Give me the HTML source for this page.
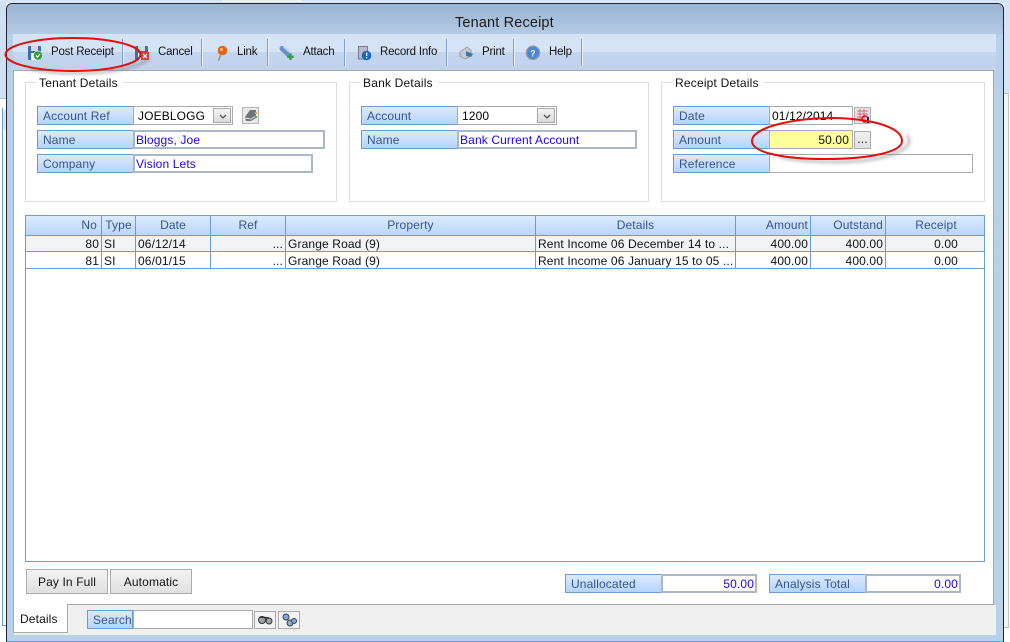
<!DOCTYPE html>
<html><head><meta charset="utf-8"><title>Tenant Receipt</title>
<style>
html,body{margin:0;padding:0;background:#fff}
body{width:1010px;height:642px;overflow:hidden;position:relative;font:12px "Liberation Sans",sans-serif;letter-spacing:.13px;color:#000}
div,span{position:absolute;box-sizing:border-box;white-space:nowrap}
.lb{height:19px;width:97px;border:1px solid #6b9bd2;background:linear-gradient(#dcebfd,#b5d3fb);color:#35558f;line-height:17px;padding:1px 0 0 5px}
.in{height:19px;background:#fff;border:2px solid #a9b7c7;color:#2200ee;line-height:15px;padding:1px 0 0 1px}
.cb{height:19px;background:#fff;border:1px solid #ababab;line-height:17px;padding:1px 0 0 4px}
.dd{width:18px;height:15px;top:1px;right:1px;background:linear-gradient(#f2f2f2,#dcdcdc);border:1px solid #a8a8a8}
.gb{border:1px solid #dcdcdc;top:82px;height:120px}
.gt{top:76px;background:#fff;padding:0 5px 0 3px;line-height:14px;color:#111;letter-spacing:.2px}
.sep{width:1px;top:39px;height:27px;background:#7f9fc8;box-shadow:1px 0 0 #e6eefa}
.tb{top:39px;line-height:27px;color:#111;font-size:11.5px;letter-spacing:-.2px}
.h{top:216px;height:19px;border-right:1px solid #6b9bd2;background:linear-gradient(#dcebfd,#bad6fb);color:#35558f;line-height:19px;text-align:center}
.c{height:17px;line-height:16px;padding:1px 2px 0;border-right:1px solid #6b9bd2;border-bottom:1px solid #6b9bd2;overflow:hidden;color:#111}
.r{text-align:right}
.btn{top:569px;height:25px;width:82px;background:linear-gradient(#f3f3f3,#e0e0e0);border:1px solid #ababab;text-align:center;line-height:23px;padding-top:1px;color:#111}
.ic{top:611px;height:18px;width:22px;background:#f2f2f2;border:1px solid #ababab}
svg{position:absolute;overflow:visible}
</style></head><body>
<!-- background behind window -->
<div style="left:0;top:0;width:1010px;height:3px;background:#d6e4f5"></div>
<div style="left:222px;top:0;width:80px;height:2px;background:#eef0f2"></div>
<div style="left:0;top:3px;width:6px;height:95px;background:#cfe0f2"></div>
<div style="left:2px;top:110px;width:4px;height:20px;background:#dbe8f7"></div>
<div style="left:2px;top:108px;width:1px;height:517px;background:#6b9bd2"></div>
<div style="left:2px;top:625px;width:4px;height:1px;background:#6b9bd2"></div>
<div style="left:0;top:98px;width:6px;height:1px;background:#bbb"></div>
<div style="left:1004px;top:3px;width:6px;height:90px;background:#d6e4f5"></div>
<div style="left:1004px;top:93px;width:5px;height:535px;background:#f4f4f4;border-bottom:1px solid #bbb;border-right:1px solid #c0c0c0;border-top:1px solid #c0c0c0"></div>
<!-- window -->
<div style="left:6px;top:3px;width:998px;height:639px;border:1px solid #1d2433;border-bottom:0;border-radius:6px 6px 0 0;background:#b9d0e9;overflow:hidden">
 <div style="left:0;top:0;width:996px;height:31px;background:linear-gradient(#99b4d1,#b5cbe4)"></div>
 <div style="left:0;bottom:0;width:996px;height:1px;background:#3bb8d8"></div>
</div>
<div style="left:455px;top:14px;font-size:14.5px;line-height:18px;letter-spacing:.15px;color:#1a1a1a">Tenant Receipt</div>
<!-- toolbar -->
<div style="left:13px;top:34px;width:983px;height:36px;background:linear-gradient(#d5e3f6 0,#d5e3f6 50%,#c4d5ee 50%,#c0d2ec 100%)"></div>
<div class="tb" style="left:51px">Post Receipt</div>
<div class="tb" style="left:158px">Cancel</div>
<div class="tb" style="left:237px">Link</div>
<div class="tb" style="left:303px">Attach</div>
<div class="tb" style="left:380px">Record Info</div>
<div class="tb" style="left:482px">Print</div>
<div class="tb" style="left:549px">Help</div>
<div class="sep" style="left:122px"></div><div class="sep" style="left:201px"></div><div class="sep" style="left:267px"></div><div class="sep" style="left:344px"></div><div class="sep" style="left:446px"></div><div class="sep" style="left:513px"></div><div class="sep" style="left:581px"></div>
<!-- toolbar icons -->
<svg style="left:0;top:0" width="1010" height="80">
 <g><rect x="28" y="46" width="13" height="14" rx="1" fill="#3d6db0"/><rect x="31" y="46" width="7" height="5" fill="#d8d8d8"/><rect x="31" y="53" width="7" height="7" fill="#eef2f8"/><circle cx="38" cy="55.500" r="4.600" fill="#2f9e3c" stroke="#e8f3e8" stroke-width=".6"/><path d="M36 55.500l1.500 1.500 2.500-3" stroke="#fff" stroke-width="1.300" fill="none"/></g>
 <g><rect x="135" y="46" width="13" height="14" rx="1" fill="#3d6db0"/><rect x="138" y="46" width="7" height="5" fill="#d8d8d8"/><rect x="138" y="53" width="7" height="7" fill="#eef2f8"/><rect x="141" y="52" width="8" height="8" fill="#d23a2a"/><path d="M143 54l4 4m0-4l-4 4" stroke="#fff" stroke-width="1.300"/></g>
 <g><path d="M220.500 55l-2 5.500" stroke="#8a8a8a" stroke-width="1.400"/><circle cx="222.500" cy="50.500" r="4.800" fill="#e0661c"/><circle cx="221.500" cy="49.500" r="1.600" fill="#f6b070"/></g>
 <g><path d="M282 48.500l7 6.500" stroke="#6a90c5" stroke-width="5" stroke-linecap="round"/><path d="M283.500 47l7 6" stroke="#b5cce8" stroke-width="1.500"/><path d="M290.500 53.500v6.500m-3.200-3.200h6.400" stroke="#2f9e3c" stroke-width="2.400"/></g>
 <g><rect x="358.500" y="46.500" width="9" height="12.500" fill="#b8bcc8" stroke="#777a90" stroke-width="1"/><circle cx="366.500" cy="55.500" r="4.800" fill="#1568c8"/><rect x="366" y="52.500" width="1.300" height="3.500" fill="#fff"/><rect x="366" y="57" width="1.300" height="1.300" fill="#fff"/></g>
 <g><path d="M460 52l7-5 4 3v6l-6 3-5-3z" fill="#c8ccd2" stroke="#888" stroke-width=".7"/><path d="M466 51l7 3-2 3-5-1z" fill="#3d76b8"/></g>
 <g><circle cx="533" cy="52.800" r="6.700" fill="#4a86d6" stroke="#9a9a9a" stroke-width="1.300"/><text x="533" y="56.300" text-anchor="middle" font-family="Liberation Sans" font-weight="bold" font-size="9" fill="#fff">?</text></g>
</svg>
<!-- main panel -->
<div style="left:13px;top:70px;width:981px;height:535px;background:#fff;border:1px solid #a9a9a9"></div>
<div style="left:14px;top:605px;width:982px;height:30px;background:#efefef"></div>
<div style="left:13px;top:604px;width:55px;height:29px;background:#fff;border:1px solid #a9a9a9;border-top:0;line-height:30px;padding-left:6px;color:#111">Details</div>
<!-- groups -->
<div class="gb" style="left:25px;width:312px"></div><div class="gt" style="left:36px">Tenant Details</div>
<div class="gb" style="left:349px;width:300px"></div><div class="gt" style="left:360px">Bank Details</div>
<div class="gb" style="left:661px;width:324px"></div><div class="gt" style="left:672px">Receipt Details</div>
<!-- tenant -->
<div class="lb" style="left:37px;top:106px">Account Ref</div>
<div class="cb" style="left:133px;top:106px;width:100px">JOEBLOGG<div class="dd"><svg style="left:5px;top:5px" width="8" height="6"><path d="M1 1l3 3 3-3" stroke="#555" stroke-width="1.300" fill="none"/></svg></div></div>
<div style="left:242px;top:107px;width:17px;height:17px;background:#e8e8e8;border:1px solid #b5b5b5"></div>
<svg style="left:243px;top:108px" width="15" height="15"><path d="M2 9l5-7h6v8l-5 3H3z" fill="#6f7478"/><path d="M2 10l6 1 5-3" stroke="#ddd" fill="none"/><rect x="12" y="4" width="2" height="2" fill="#d9b23a"/><rect x="12" y="8" width="2" height="2" fill="#5aa84a"/></svg>
<div class="lb" style="left:37px;top:130px">Name</div>
<div class="in" style="left:133px;top:130px;width:192px">Bloggs, Joe</div>
<div class="lb" style="left:37px;top:154px">Company</div>
<div class="in" style="left:133px;top:154px;width:180px">Vision Lets</div>
<!-- bank -->
<div class="lb" style="left:361px;top:106px">Account</div>
<div class="cb" style="left:457px;top:106px;width:100px">1200<div class="dd"><svg style="left:5px;top:5px" width="8" height="6"><path d="M1 1l3 3 3-3" stroke="#555" stroke-width="1.300" fill="none"/></svg></div></div>
<div class="lb" style="left:361px;top:130px">Name</div>
<div class="in" style="left:457px;top:130px;width:180px">Bank Current Account</div>
<!-- receipt -->
<div class="lb" style="left:673px;top:106px">Date</div>
<div class="cb" style="left:769px;top:106px;width:84px;padding-left:2px">01/12/2014</div>
<div style="left:854px;top:107px;width:17px;height:17px;background:#e4e4e4;border:1px solid #b0b0b0"></div>
<svg style="left:855px;top:108px" width="15" height="15"><path d="M2 3h11M2 6h11M2 9h8M5 1v10M9 1v10" stroke="#d86a7a" stroke-width="1"/><circle cx="10" cy="11" r="3" fill="none" stroke="#d01010" stroke-width="1.500"/><rect x="12" y="9" width="2" height="6" fill="#101c80"/></svg>
<div class="lb" style="left:673px;top:130px">Amount</div>
<div style="left:769px;top:130px;width:84px;height:19px;background:#ffff99;border:1px solid #ababab;text-align:right;line-height:17px;padding:1px 3px 0 0;color:#111">50.00</div>
<div style="left:854px;top:131px;width:17px;height:18px;background:linear-gradient(#f0f0f0,#e0e0e0);border:1px solid #ababab;text-align:center;line-height:15px;color:#222">...</div>
<div class="lb" style="left:673px;top:154px">Reference</div>
<div class="cb" style="left:769px;top:154px;width:204px"></div>
<!-- grid -->
<div style="left:25px;top:215px;width:960px;height:347px;border:1px solid #6b9bd2;background:#fff"></div>
<div class="h r" style="left:26px;width:76px;padding-right:4px">No</div>
<div class="h" style="left:102px;width:34px">Type</div>
<div class="h" style="left:136px;width:75px">Date</div>
<div class="h" style="left:211px;width:75px">Ref</div>
<div class="h" style="left:286px;width:250px">Property</div>
<div class="h" style="left:536px;width:200px">Details</div>
<div class="h r" style="left:736px;width:75px;padding-right:2px">Amount</div>
<div class="h r" style="left:811px;width:75px;padding-right:2px">Outstand</div>
<div class="h" style="left:886px;width:98px;border-right:0;padding-left:2px">Receipt</div>
<div style="left:26px;top:235px;width:958px;height:1px;background:#6b9bd2"></div>
<div style="left:26px;top:236px;width:958px;height:16px;background:#f3f3f3"></div>
<div class="c r" style="left:26px;top:236px;width:76px;height:16px;padding-top:0">80</div><div class="c" style="left:102px;top:236px;width:34px;height:16px;padding-top:0">SI</div><div class="c" style="left:136px;top:236px;width:75px;height:16px;padding-top:0">06/12/14</div><div class="c r" style="left:211px;top:236px;width:75px;height:16px;padding-top:0">...</div><div class="c" style="left:286px;top:236px;width:250px;height:16px;padding-top:0">Grange Road (9)</div><div class="c" style="left:536px;top:236px;width:200px;height:16px;padding-top:0">Rent Income 06 December 14 to ...</div><div class="c r" style="left:736px;top:236px;width:75px;height:16px;padding-top:0">400.00</div><div class="c r" style="left:811px;top:236px;width:75px;height:16px;padding-top:0">400.00</div><div class="c r" style="left:886px;top:236px;width:98px;height:16px;padding:0 26px 0 0;border-right:0">0.00</div>
<div class="c r" style="left:26px;top:252px;width:76px">81</div><div class="c" style="left:102px;top:252px;width:34px">SI</div><div class="c" style="left:136px;top:252px;width:75px">06/01/15</div><div class="c r" style="left:211px;top:252px;width:75px">...</div><div class="c" style="left:286px;top:252px;width:250px">Grange Road (9)</div><div class="c" style="left:536px;top:252px;width:200px">Rent Income 06 January 15 to 05 ...</div><div class="c r" style="left:736px;top:252px;width:75px">400.00</div><div class="c r" style="left:811px;top:252px;width:75px">400.00</div><div class="c r" style="left:886px;top:252px;width:98px;padding:1px 26px 0 0;border-right:0">0.00</div>
<!-- bottom -->
<div class="btn" style="left:26px">Pay In Full</div>
<div class="btn" style="left:110px">Automatic</div>
<div class="lb" style="left:565px;top:574px">Unallocated</div>
<div class="in r" style="left:661px;top:574px;width:96px;padding-right:1px">50.00</div>
<div class="lb" style="left:769px;top:574px">Analysis Total</div>
<div class="in r" style="left:865px;top:574px;width:96px;padding-right:1px">0.00</div>
<div class="lb" style="left:87px;top:610px;width:46px">Search</div>
<div class="cb" style="left:133px;top:610px;width:120px"></div>
<div class="ic" style="left:254px"><svg style="left:2px;top:3px" width="16" height="10"><circle cx="5" cy="5" r="3.500" fill="#a0a5aa" stroke="#333"/><circle cx="12" cy="6" r="3" fill="#a0a5aa" stroke="#333"/><path d="M3 2l9 1" stroke="#333" stroke-width="1.500"/></svg></div>
<div class="ic" style="left:278px"><svg style="left:2px;top:1px" width="16" height="14"><circle cx="5" cy="4" r="3" fill="#7fa8d8" stroke="#345"/><circle cx="9" cy="10" r="3" fill="#9ab" stroke="#345"/><circle cx="13" cy="8" r="2.500" fill="#7fa8d8" stroke="#345"/></svg></div>
<!-- red annotations -->
<svg style="left:0;top:0" width="1010" height="642">
 <defs><filter id="b" x="-10%" y="-30%" width="120%" height="160%"><feGaussianBlur stdDeviation="1.600"/></filter></defs>
 <path d="M30 69c40 8 95 4 116-8 3-2 3-5 1-8" fill="none" stroke="#777" stroke-opacity=".55" stroke-width="2.500" filter="url(#b)"/>
 <ellipse cx="73" cy="54.500" rx="67.500" ry="16.500" fill="none" stroke="#e60d0d" stroke-width="2"/>
 <path d="M780 157c40 8 110 8 128-12 2-3 1-7-1-10" fill="none" stroke="#777" stroke-opacity=".55" stroke-width="2.500" filter="url(#b)"/>
 <path d="M752 141C752 128 790 118 835 118C875 119 902 128 902 141C902 152 870 159 825 159C785 159 752 153 752 141z" fill="none" stroke="#e60d0d" stroke-width="2"/>
</svg>
</body></html>
